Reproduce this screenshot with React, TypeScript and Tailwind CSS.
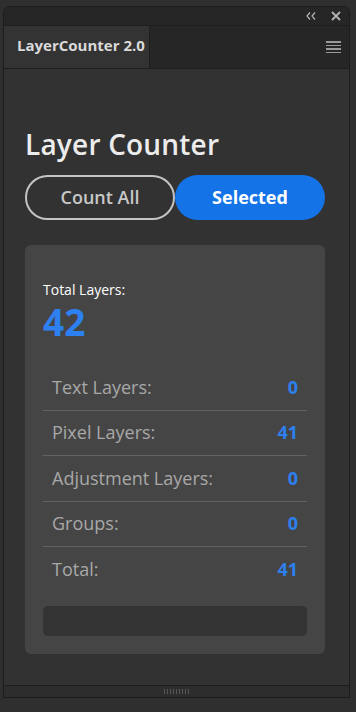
import React from "react";

const rows = [
  { label: "Text Layers:", value: 0 },
  { label: "Pixel Layers:", value: 41 },
  { label: "Adjustment Layers:", value: 0 },
  { label: "Groups:", value: 0 },
  { label: "Total:", value: 41 },
];

export default function App() {
  return (
    <div
      className="w-[356px] h-[712px] bg-[#2f2f2f] pt-[6px] pl-[3px] overflow-hidden"
      style={{ fontFamily: '"Open Sans", "Noto Sans", sans-serif' }}
    >
      <div className="w-[347px] h-[692px] flex flex-col rounded-t-[6px] border border-[#1c1c1c] overflow-hidden">
        {/* title bar */}
        <div className="h-[19px] bg-[#262626] flex items-center justify-end gap-[15px] pr-[8px] border-b border-[#1e1e1e]">
          <svg width="10" height="8" viewBox="0 0 10 8" className="text-[#b4b4b4]">
            <path d="M4 0.5 L1 4 L4 7.5 M9 0.5 L6 4 L9 7.5" fill="none" stroke="currentColor" strokeWidth="1.2" />
          </svg>
          <svg width="10" height="10" viewBox="0 0 10 10" className="text-[#b4b4b4]">
            <path d="M1 1 L9 9 M9 1 L1 9" fill="none" stroke="currentColor" strokeWidth="1.8" />
          </svg>
        </div>

        {/* tab row */}
        <div className="h-[43px] bg-[#262626] flex border-b border-[#1e1e1e]">
          <div className="w-[146px] bg-[#333333] border-r border-[#1e1e1e] pl-[13px] pt-[8px] text-[15px] font-bold text-[#dadada]">
            LayerCounter 2.0
          </div>
          <div className="flex-1 flex justify-end pr-[8px] pt-[15px]">
            <div className="w-[15px] flex flex-col gap-[2px]">
              <div className="h-[1.5px] bg-[#9a9a9a]" />
              <div className="h-[1.5px] bg-[#9a9a9a]" />
              <div className="h-[1.5px] bg-[#9a9a9a]" />
              <div className="h-[1.5px] bg-[#9a9a9a]" />
            </div>
          </div>
        </div>

        {/* content */}
        <div className="flex-1 bg-[#323232] px-[21px] pt-[58px]">
          <h1 className="text-[28px] leading-[34px] font-semibold text-[#ececec] tracking-[0.2px]">Layer Counter</h1>
          <div className="mt-[14px] flex">
            <button className="w-[150px] h-[45px] rounded-full border-2 border-[#c4c4c4] text-[18px] font-semibold text-[#c8c8c8]">
              Count All
            </button>
            <button className="w-[150px] h-[45px] rounded-full bg-[#1473e6] text-[18px] font-bold text-white">
              Selected
            </button>
          </div>

          <div className="mt-[25px] w-[300px] rounded-[6px] bg-[#454545] px-[18px] pt-[35px] pb-[18px]">
            <div className="text-[14px] leading-[20px] text-white">Total Layers:</div>
            <div className="text-[37px] leading-[44px] font-bold text-[#2d80f0]">42</div>
            <div className="mt-[21px]">
              {rows.map((r, i) => (
                <div
                  key={r.label}
                  className={`h-[45.5px] flex items-center justify-between px-[9px] ${
                    i < rows.length - 1 ? "border-b border-[#626262]" : ""
                  }`}
                >
                  <span className="text-[18px] text-[#a8a8a8]">{r.label}</span>
                  <span className="text-[18px] font-bold text-[#2d80f0]">{r.value}</span>
                </div>
              ))}
            </div>
            <div className="mt-[13px] h-[30px] rounded-[5px] bg-[#333333]" />
          </div>
        </div>

        {/* bottom grip */}
        <div className="h-[12px] bg-[#2d2d2d] border-t border-[#1e1e1e] flex items-center justify-center gap-[2px]">
          {Array.from({ length: 9 }).map((_, i) => (
            <div key={i} className="w-px h-[5px] bg-[#555]" />
          ))}
        </div>
      </div>
    </div>
  );
}
